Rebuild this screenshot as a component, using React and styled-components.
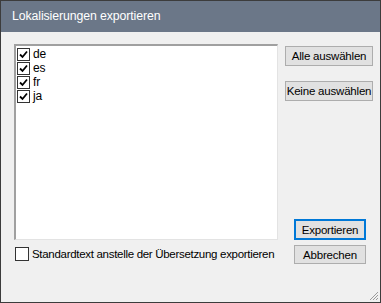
import React from 'react';
import styled, { createGlobalStyle } from 'styled-components';

const Global = createGlobalStyle`
  html, body { margin: 0; padding: 0; background: #ffffff; }
  body { font-family: "Liberation Sans", Arial, sans-serif; }
`;

const Window = styled.div`
  width: 381px;
  height: 303px;
  box-sizing: border-box;
  border: 1px solid #3c3c3c;
  background: #f0f0f0;
  display: flex;
  flex-direction: column;
  position: relative;
  overflow: hidden;
`;

const TitleBar = styled.div`
  height: 30px;
  background: #6b7788;
  color: #ffffff;
  font-size: 12.3px;
  letter-spacing: -0.1px;
  display: flex;
  align-items: center;
  padding-left: 11px;
  padding-bottom: 1px;
  white-space: nowrap;
`;

const Body = styled.div`
  flex: 1;
  display: grid;
  grid-template-columns: 264px 1fr;
  grid-template-rows: 196px 20px;
  row-gap: 4px;
  padding: 12px 0 0 13px;
  font-size: 11.5px;
  letter-spacing: -0.2px;
  color: #000;
  white-space: nowrap;
`;

const ListBox = styled.div`
  background: #ffffff;
  border-top: 2px solid #a0a0a0;
  border-left: 2px solid #a0a0a0;
  border-right: 1px solid #e3e3e3;
  border-bottom: 1px solid #e3e3e3;
  padding: 1px 0 0 1px;
  display: flex;
  flex-direction: column;
`;

const Row = styled.label`
  display: flex;
  align-items: center;
  height: 14px;
  gap: 3px;
  font-size: 12px;
  line-height: 14px;
`;

const Box = styled.span`
  width: ${p => p.$size || 11}px;
  height: ${p => p.$size || 11}px;
  border: 1px solid #333;
  background: #fff;
  display: flex;
  align-items: center;
  justify-content: center;
  flex: none;
`;

const Side = styled.div`
  display: flex;
  flex-direction: column;
  align-items: center;
  padding-top: 1px;
`;

const Button = styled.div`
  box-sizing: border-box;
  width: ${p => p.$w}px;
  height: ${p => p.$h || 20}px;
  margin-top: ${p => p.$mt || 0}px;
  margin-left: ${p => p.$ml || 0}px;
  background: #e1e1e1;
  border: ${p => (p.$primary ? '2px solid #0078d7' : '1px solid #adadad')};
  display: flex;
  align-items: center;
  justify-content: center;
  line-height: 14px;
  color: #000;
  white-space: nowrap;
`;

const Spacer = styled.div`
  flex: 1;
`;

const Footer = styled.label`
  display: flex;
  align-items: center;
  gap: 3px;
  line-height: 14px;
  letter-spacing: -0.3px;
  margin-left: 1px;
`;

const Grip = styled.svg`
  position: absolute;
  right: 1px;
  bottom: 1px;
`;

function Check({ checked, size }) {
  return (
    <Box $size={size}>
      {checked && (
        <svg width="9" height="9" viewBox="0 0 9 9">
          <path d="M1 4.5 L3.5 7 L8 1.5" stroke="#000" strokeWidth="1.8" fill="none" />
        </svg>
      )}
    </Box>
  );
}

const langs = ['de', 'es', 'fr', 'ja'];

export default function App() {
  return (
    <>
      <Global />
      <Window>
        <TitleBar>Lokalisierungen exportieren</TitleBar>
        <Body>
          <ListBox>
            {langs.map(l => (
              <Row key={l}>
                <Check checked />
                {l}
              </Row>
            ))}
          </ListBox>
          <Side>
            <Button $w={88} $mt={1}>Alle auswählen</Button>
            <Button $w={88} $mt={15}>Keine auswählen</Button>
            <Spacer />
            <Button $w={72} $h={21} $ml={2} $primary>Exportieren</Button>
          </Side>
          <Footer>
            <Check size={12} />
            Standardtext anstelle der Übersetzung exportieren
          </Footer>
          <Side>
            <Button $w={72} $ml={2}>Abbrechen</Button>
          </Side>
        </Body>
        <Grip width="12" height="12" viewBox="0 0 12 12">
          <path d="M11 3 L3 11 M11 6 L6 11 M11 9 L9 11" stroke="#9a9a9a" strokeWidth="1" />
        </Grip>
      </Window>
    </>
  );
}
